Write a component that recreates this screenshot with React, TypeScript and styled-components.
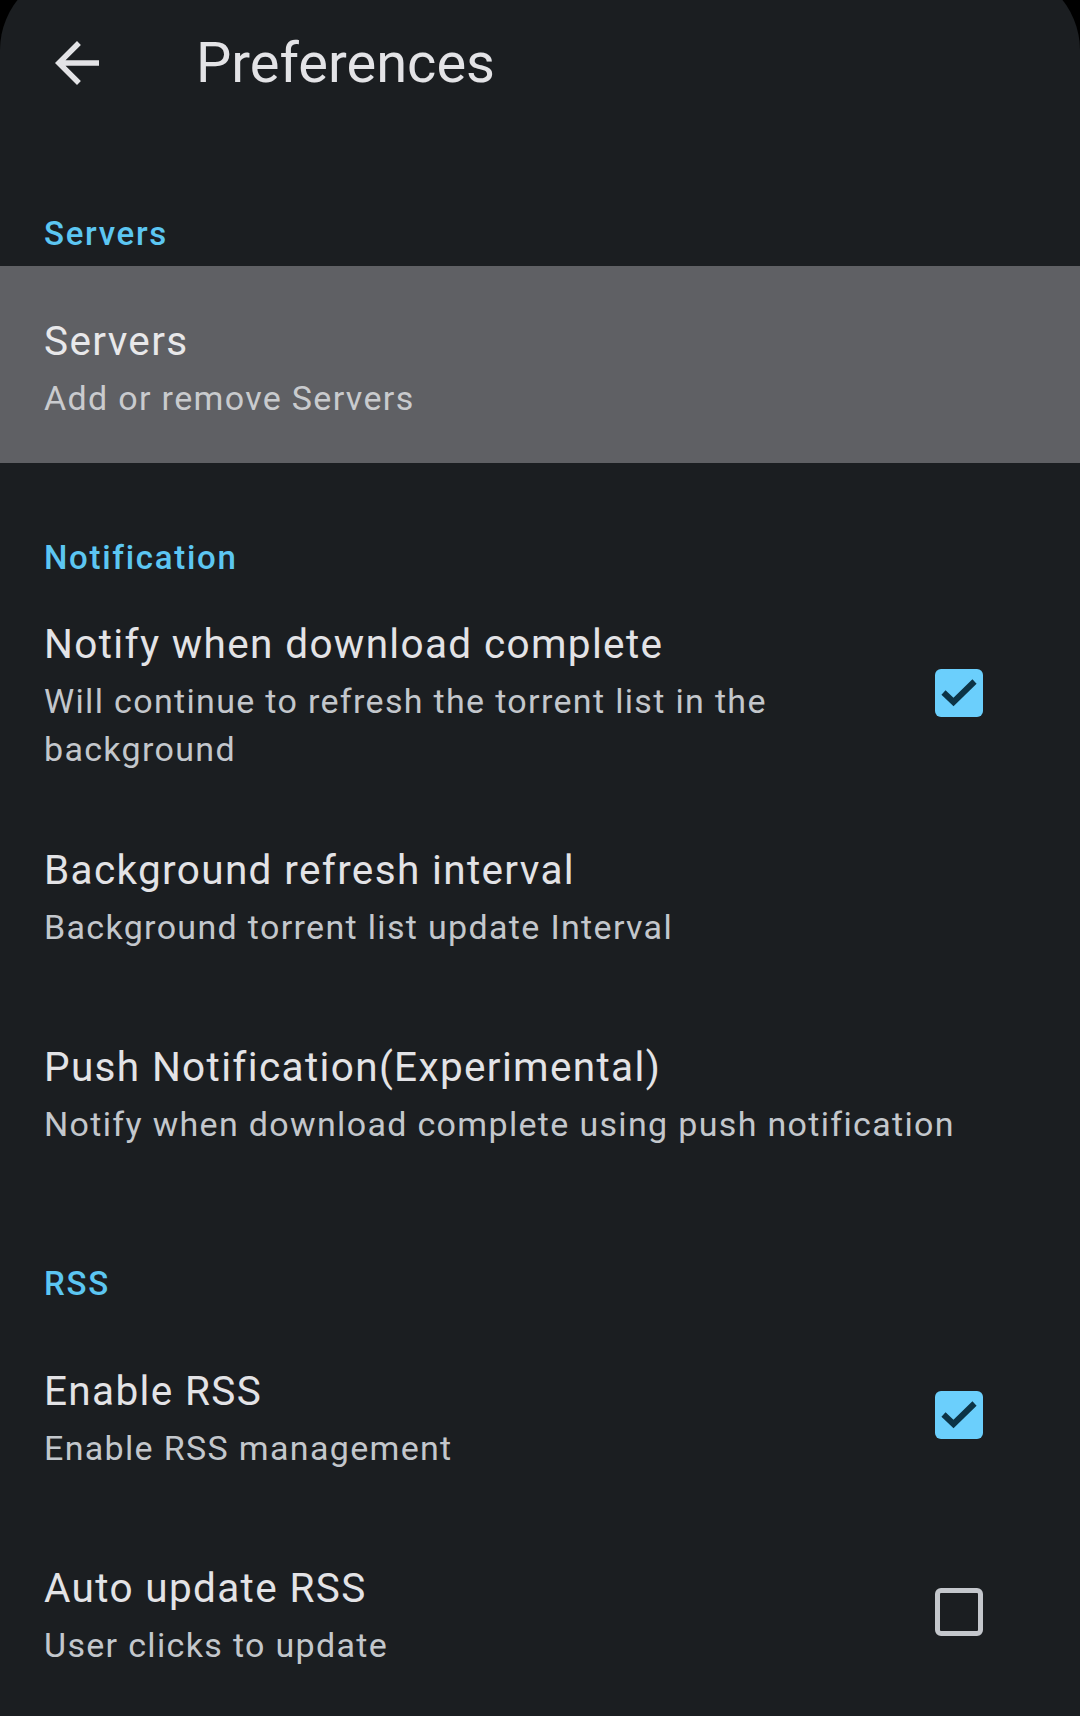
import React from "react";
import styled, { createGlobalStyle } from "styled-components";

const GlobalStyle = createGlobalStyle`
  html, body {
    margin: 0;
    padding: 0;
    background: #000;
  }
  body {
    font-family: Roboto, "Noto Sans", "Liberation Sans", sans-serif;
    -webkit-font-smoothing: antialiased;
  }
`;

const Screen = styled.div`
  margin-top: -30px;
  padding-top: 30px;
  min-height: 1746px;
  box-sizing: border-box;
  background: #1b1e21;
  border-radius: 80px 80px 0 0;
  overflow: hidden;
`;

const AppBar = styled.header`
  height: 126px;
  display: flex;
  align-items: center;
`;

const BackButton = styled.button`
  width: 66px;
  height: 66px;
  margin-left: 44px;
  padding: 0;
  border: none;
  background: transparent;
  display: flex;
  align-items: center;
  justify-content: center;
  color: #e3e3e6;
  svg {
    width: 66px;
    height: 66px;
    display: block;
  }
`;

const AppTitle = styled.h1`
  margin: 0 0 0 86px;
  font-size: 56px;
  line-height: 66px;
  font-weight: 400;
  color: #e3e3e6;
  letter-spacing: 0;
`;

const List = styled.main`
  padding-top: 13px;
  display: flex;
  flex-direction: column;
`;

const SectionHeader = styled.h2`
  margin: 0;
  padding: 75px 44px 12px;
  font-size: 33px;
  line-height: 40px;
  font-weight: 500;
  letter-spacing: 1.7px;
  color: #5cc6f2;
`;

const Tile = styled.div<{ $highlighted?: boolean; $hasTrailing?: boolean }>`
  display: flex;
  align-items: center;
  padding: 0 ${(p) => (p.$hasTrailing ? "66px" : "44px")} 0 44px;
  background: ${(p) => (p.$highlighted ? "#5f6064" : "transparent")};
`;

const TextBlock = styled.div<{ $top: number; $bottom: number }>`
  flex: 1;
  min-width: 0;
  padding-top: ${(p) => p.$top}px;
  padding-bottom: ${(p) => p.$bottom}px;
`;

const Title = styled.div<{ $highlighted?: boolean }>`
  font-size: 40.5px;
  line-height: 56px;
  letter-spacing: 1.35px;
  font-weight: 400;
  color: ${(p) => (p.$highlighted ? "#e8e8ea" : "#e3e3e6")};
  white-space: nowrap;
`;

const Subtitle = styled.div<{ $highlighted?: boolean }>`
  margin-top: 5px;
  font-size: 34px;
  line-height: 48px;
  letter-spacing: 1.33px;
  font-weight: 400;
  color: ${(p) => (p.$highlighted ? "#c9cbce" : "#c3c7cc")};
`;

const Trailing = styled.div`
  width: 110px;
  margin-left: 44px;
  display: flex;
  align-items: center;
  justify-content: center;
  flex-shrink: 0;
`;

const Box = styled.span<{ $checked: boolean }>`
  width: 48px;
  height: 48px;
  box-sizing: border-box;
  border-radius: 6px;
  background: ${(p) => (p.$checked ? "#6bcffc" : "transparent")};
  border: ${(p) => (p.$checked ? "none" : "5px solid #c4c7cc")};
  display: flex;
  align-items: center;
  justify-content: center;
  svg {
    width: 48px;
    height: 48px;
    display: block;
  }
`;

const Checkbox = ({ checked }: { checked: boolean }) => (
  <Box $checked={checked}>
    {checked && (
      <svg viewBox="0 0 48 48" fill="none">
        <path
          d="M8.5 23.5 L18.5 33 L39.5 12.5"
          stroke="#0c3446"
          strokeWidth="6"
          strokeLinecap="butt"
          strokeLinejoin="miter"
        />
      </svg>
    )}
  </Box>
);

type Pref = {
  title: string;
  subtitle: string;
  checkbox?: boolean;
  highlighted?: boolean;
  pad: [number, number];
};

type Section = { header: string; items: Pref[] };

const sections: Section[] = [
  {
    header: "Servers",
    items: [
      {
        title: "Servers",
        subtitle: "Add or remove Servers",
        highlighted: true,
        pad: [47, 41],
      },
    ],
  },
  {
    header: "Notification",
    items: [
      {
        title: "Notify when download complete",
        subtitle: "Will continue to refresh the torrent list in the background",
        checkbox: true,
        pad: [26, 22],
      },
      {
        title: "Background refresh interval",
        subtitle: "Background torrent list update Interval",
        pad: [47, 41],
      },
      {
        title: "Push Notification(Experimental)",
        subtitle: "Notify when download complete using push notification",
        pad: [47, 41],
      },
    ],
  },
  {
    header: "RSS",
    items: [
      {
        title: "Enable RSS",
        subtitle: "Enable RSS management",
        checkbox: true,
        pad: [47, 41],
      },
      {
        title: "Auto update RSS",
        subtitle: "User clicks to update",
        checkbox: false,
        pad: [47, 41],
      },
    ],
  },
];

export default function App() {
  return (
    <>
      <GlobalStyle />
      <Screen>
        <AppBar>
          <BackButton aria-label="Back">
            <svg viewBox="0 0 24 24">
              <path
                fill="currentColor"
                d="M20 11H7.83l5.59-5.59L12 4l-8 8 8 8 1.41-1.41L7.83 13H20v-2z"
              />
            </svg>
          </BackButton>
          <AppTitle>Preferences</AppTitle>
        </AppBar>
        <List>
          {sections.map((s) => (
            <React.Fragment key={s.header}>
              <SectionHeader>{s.header}</SectionHeader>
              {s.items.map((it) => (
                <Tile
                  key={it.title}
                  $highlighted={it.highlighted}
                  $hasTrailing={it.checkbox !== undefined}
                >
                  <TextBlock $top={it.pad[0]} $bottom={it.pad[1]}>
                    <Title $highlighted={it.highlighted}>{it.title}</Title>
                    <Subtitle $highlighted={it.highlighted}>{it.subtitle}</Subtitle>
                  </TextBlock>
                  {it.checkbox !== undefined && (
                    <Trailing>
                      <Checkbox checked={it.checkbox} />
                    </Trailing>
                  )}
                </Tile>
              ))}
            </React.Fragment>
          ))}
        </List>
      </Screen>
    </>
  );
}
